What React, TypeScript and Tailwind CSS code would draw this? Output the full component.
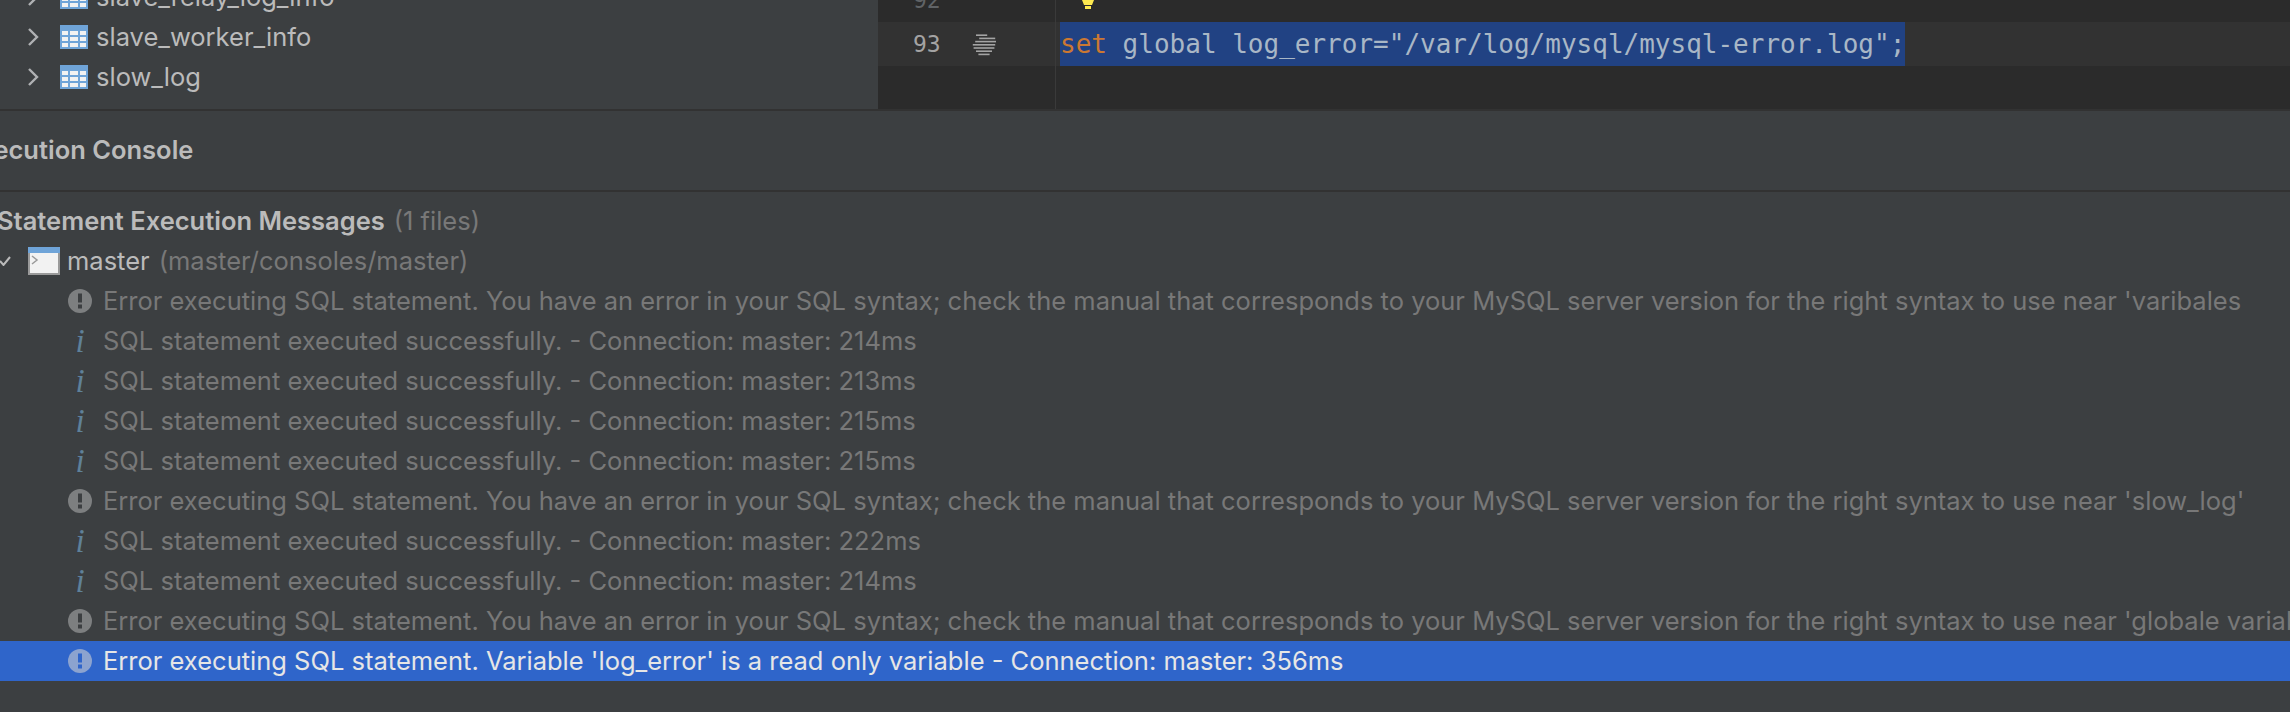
const uiFont = { fontFamily: 'Inter, "Noto Sans", sans-serif' }

const longError = (near: string) =>
  `Error executing SQL statement. You have an error in your SQL syntax; check the manual that corresponds to your MySQL server version for the right syntax to use near '${near}`

type Message = { kind: 'error' | 'info'; text: string; selected?: boolean }

const messages: Message[] = [
  { kind: 'error', text: longError('varibales') },
  { kind: 'info', text: 'SQL statement executed successfully. - Connection: master: 214ms' },
  { kind: 'info', text: 'SQL statement executed successfully. - Connection: master: 213ms' },
  { kind: 'info', text: 'SQL statement executed successfully. - Connection: master: 215ms' },
  { kind: 'info', text: 'SQL statement executed successfully. - Connection: master: 215ms' },
  { kind: 'error', text: longError("slow_log'") },
  { kind: 'info', text: 'SQL statement executed successfully. - Connection: master: 222ms' },
  { kind: 'info', text: 'SQL statement executed successfully. - Connection: master: 214ms' },
  { kind: 'error', text: longError('globale variables') },
  { kind: 'error', text: "Error executing SQL statement. Variable 'log_error' is a read only variable - Connection: master: 356ms", selected: true },
]

function TableIcon() {
  return (
    <svg width="28" height="24" viewBox="0 0 28 24" className="shrink-0">
      <rect width="28" height="24" fill="#6fa4d8" />
      <g fill="#f2f2f2">
        {[6, 12, 18].map(y =>
          [2, 10, 20].map(x => <rect key={`${x}-${y}`} x={x} y={y} width={x === 10 ? 8 : 6} height="4" />)
        )}
      </g>
    </svg>
  )
}

function Chevron() {
  return (
    <svg width="12" height="20" viewBox="0 0 12 20" className="shrink-0">
      <path d="M2 2l8 8-8 8" fill="none" stroke="#afb1b3" strokeWidth="2.4" />
    </svg>
  )
}

function TreeRow({ name }: { name: string }) {
  return (
    <div className="flex h-10 items-center pl-[27px]">
      <Chevron />
      <div className="ml-[21px]"><TableIcon /></div>
      <span className="ml-2 text-[25.5px] text-[#bbbbbb]">{name}</span>
    </div>
  )
}

function ErrorIcon({ selected }: { selected?: boolean }) {
  return (
    <svg width="24" height="24" viewBox="0 0 24 24" className="shrink-0">
      <circle cx="12" cy="12" r="12" fill={selected ? '#8ca3cf' : '#7d7f80'} />
      <rect x="10" y="4.5" width="4" height="9" fill={selected ? '#2f65ca' : '#3c3f41'} />
      <rect x="10" y="15.5" width="4" height="4" fill={selected ? '#2f65ca' : '#3c3f41'} />
    </svg>
  )
}

function InfoIcon() {
  return (
    <span className="flex w-6 shrink-0 justify-center text-[33px] italic leading-none text-[#5f8199]" style={{ fontFamily: '"Liberation Serif", serif' }}>
      i
    </span>
  )
}

function GutterMark() {
  // striped disabled-run marker
  const bars = [
    [6, 3, 14, 2], [10, 7, 20, 2], [5, 11, 26, 2], [2, 15, 28, 2], [3, 19, 26, 2], [6, 23, 20, 2], [9, 27, 14, 2],
  ]
  return (
    <svg width="26" height="24" viewBox="0 0 32 30" className="shrink-0">
      {bars.map(([x, y, w, h], i) => <rect key={i} x={x} y={y} width={w} height={h} fill="#a4a4a4" />)}
    </svg>
  )
}

export default function App() {
  return (
    <div className="flex h-[712px] w-[2290px] flex-col overflow-hidden bg-[#3c3f41]" style={uiFont}>
      {/* top: tree + editor */}
      <div className="flex h-[111px] shrink-0 overflow-hidden border-b-2 border-[#323232]">
        <div className="w-[878px] shrink-0">
          <div className="-mt-[23px]">
            <TreeRow name="slave_relay_log_info" />
            <TreeRow name="slave_worker_info" />
            <TreeRow name="slow_log" />
          </div>
        </div>
        <div className="relative min-w-0 flex-1 bg-[#2b2b2b]" style={{ fontFamily: '"DejaVu Sans Mono", monospace' }}>
          <div className="-mt-[22px] flex h-11 items-center">
            <span className="ml-[35px] text-[23px] text-[#606366]">92</span>
            <div className="ml-[149px] h-11 w-px" />
          </div>
          <div className="flex h-11 items-center bg-[#323232]">
            <span className="ml-[35px] w-[28px] text-[23px] tracking-[0px] text-[#a4a3a3]">93</span>
            <div className="ml-[30px]"><GutterMark /></div>
            <div className="ml-[63px] flex h-11 items-center whitespace-pre bg-[#214283] text-[26px] text-[#a9b7c6]">
              <span className="text-[#cc7832]">set</span> global log_error="/var/log/mysql/mysql-error.log";
            </div>
          </div>
          {/* gutter divider */}
          <div className="absolute bottom-0 left-[177px] top-0 w-px bg-[#3a3a3a]" />
          {/* intention bulb */}
          <svg width="14" height="9" viewBox="0 0 14 9" className="absolute left-[203px] top-0">
            <path d="M1 0h12l-2 5H3z" fill="#fde94f" />
            <rect x="4" y="6" width="6" height="3" fill="#fde94f" />
          </svg>
        </div>
      </div>

      {/* console tab header */}
      <div className="flex h-[81px] shrink-0 items-center border-b-2 border-[#323232]">
        <span className="ml-[-36px] whitespace-nowrap text-[25.5px] font-semibold text-[#bbbbbb]">Execution Console</span>
      </div>

      {/* messages */}
      <div className="pt-[9px]">
        <div className="flex h-10 items-center whitespace-nowrap text-[25.5px]">
          <span className="ml-[-3px] font-semibold text-[#bbbbbb]">Statement Execution Messages</span>
          <span className="ml-[9px] text-[#787878]">(1 files)</span>
        </div>
        <div className="flex h-10 items-center whitespace-nowrap text-[25.5px]">
          <svg width="11" height="10" viewBox="0 0 11 10" className="shrink-0">
            <path d="M0 5l3.5 4L10 1" fill="none" stroke="#bbbbbb" strokeWidth="2" />
          </svg>
          <svg width="32" height="28" viewBox="0 0 32 28" className="ml-[17px] shrink-0">
            <rect width="32" height="28" fill="#9a9a9a" />
            <rect x="2" y="6" width="28" height="20" fill="#f2f2f2" />
            <rect width="32" height="6" fill="#6fa4d8" />
            <path d="M4 9l5 4-5 4" fill="none" stroke="#9a9a9a" strokeWidth="1.5" />
          </svg>
          <span className="ml-[7px] text-[#bbbbbb]">master</span>
          <span className="ml-[9px] text-[#787878]">(master/consoles/master)</span>
        </div>
        {messages.map((m, i) => (
          <div key={i} className={`flex h-10 items-center whitespace-nowrap pl-[68px] text-[25.5px] ${m.selected ? 'bg-[#2f65ca] text-[#e6e6e6]' : 'text-[#787878]'}`}>
            {m.kind === 'error' ? <ErrorIcon selected={m.selected} /> : <InfoIcon />}
            <span className="ml-[11px]">{m.text}</span>
          </div>
        ))}
      </div>
    </div>
  )
}
